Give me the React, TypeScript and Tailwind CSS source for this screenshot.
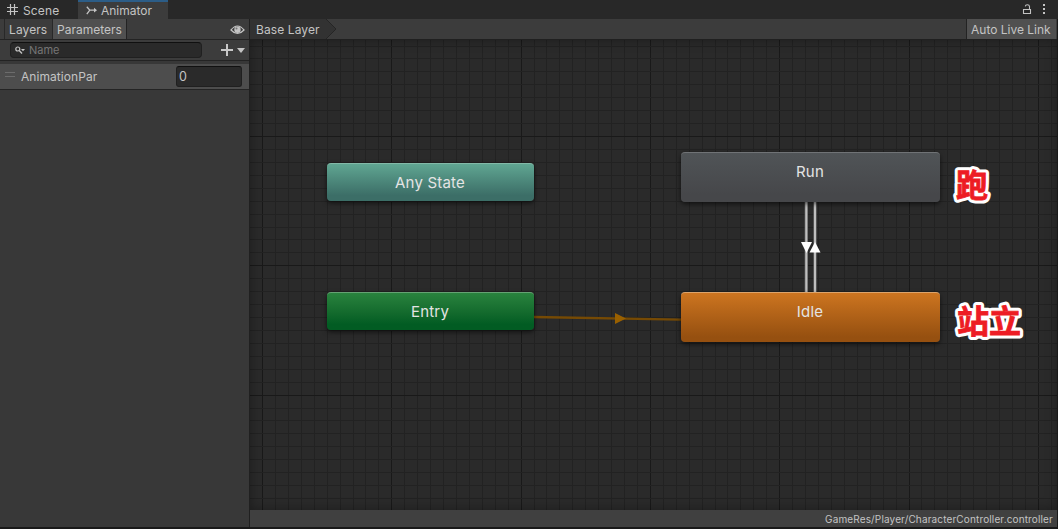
import React from 'react';

type NodeProps = {
  label: string;
  className: string;
};

const GRID = 12.93;
const WIDTH = 807;
const HEIGHT = 470;

const StateNode: React.FC<NodeProps> = ({ label, className }) => (
  <div
    className={`absolute rounded-[4px] border-t pr-px text-center text-[15px] leading-[18px] tracking-[0.2px] text-[#e4e4e4] shadow-[0_2px_5px_rgba(0,0,0,0.6)] ${className}`}
  >
    {label}
  </div>
);

const Grid: React.FC = () => {
  const columns = Array.from({ length: 63 }, (_, i) => i);
  const rows = Array.from({ length: 37 }, (_, i) => i);

  return (
    <svg className="absolute inset-0" width={WIDTH} height={HEIGHT} shapeRendering="crispEdges">
      {columns.map((i) => (
        <rect
          key={`c${i}`}
          x={Math.round(12 + i * GRID)}
          y={0}
          width={1}
          height={HEIGHT}
          fill={i % 10 === 0 ? '#191919' : '#222222'}
        />
      ))}
      {rows.map((i) => (
        <rect
          key={`r${i}`}
          x={0}
          y={Math.floor(6 + i * GRID)}
          width={WIDTH}
          height={1}
          fill={i % 10 === 7 ? '#191919' : '#222222'}
        />
      ))}
    </svg>
  );
};

const Transitions: React.FC = () => (
  <svg className="absolute inset-0" width={WIDTH} height={HEIGHT}>
    <path d="M284 277L431 279.6" stroke="#764a04" strokeWidth="2.4" />
    <path d="M365 273V284L376 278.4Z" fill="#996000" />
    <path d="M556.3 160V254M565 160V254" stroke="#646464" strokeWidth="3.4" />
    <path d="M556.3 160V254M565 160V254" stroke="#bebebe" strokeWidth="2" />
    <path d="M551 202H562L556.5 213Z" fill="#ffffff" />
    <path d="M559.5 212.5H570.5L565 202Z" fill="#ffffff" />
  </svg>
);

const Note: React.FC<{ text: string; className: string }> = ({ text, className }) => (
  <svg
    className={`absolute overflow-visible font-['Noto_Sans_CJK_SC',sans-serif] text-[32px] font-bold ${className}`}
    width="70"
    height="44"
  >
    <text x="4" y="32" fill="#ffffff" stroke="#ffffff" strokeWidth="7" strokeLinejoin="round">
      {text}
    </text>
    <text x="4" y="32" fill="#ed1c24" stroke="#ed1c24" strokeWidth="0.8">
      {text}
    </text>
  </svg>
);

const TabBar: React.FC = () => (
  <div className="flex h-[19px] shrink-0 bg-[#282828]">
    <div className="flex w-[78px] items-center pl-[7px]">
      <svg width="12" height="11" stroke="#c4c4c4" strokeWidth="1.2" fill="none">
        <path d="M3.5 0V11M7.5 0V11M0 3.5H11M0 7.5H11" />
      </svg>
      <span className="ml-1 pt-[3px] leading-4 tracking-[0.15px]">Scene</span>
    </div>
    <div className="flex w-[90px] items-center border-t-2 border-[#2c5d87] bg-[#3c3c3c] pl-[8px]">
      <svg width="12" height="10" fill="none" stroke="#c4c4c4" strokeWidth="1.3">
        <path d="M.8 .8L3.8 4.2H9M.8 8.2L3.8 4.2" />
        <path d="M8 1.8L11 4.2L8 6.6Z" fill="#c4c4c4" stroke="none" />
      </svg>
      <span className="ml-[3px] pt-px leading-4">Animator</span>
    </div>
    <div className="flex flex-1 justify-end pr-[11px] pt-1">
      <svg width="25" height="11" fill="none" stroke="#c4c4c4">
        <path d="M1.5 5.5H8.5V9.5H1.5ZM7.5 5V2.5Q7.3 .8 5.3 .8Q3.5 .8 3.3 2.4" strokeWidth="1.1" />
        <path d="M21 0H23V2H21ZM21 4H23V6H21ZM21 8H23V10H21Z" fill="#c4c4c4" stroke="none" />
      </svg>
    </div>
  </div>
);

const Sidebar: React.FC = () => (
  <div className="flex w-[250px] shrink-0 flex-col border-r border-[#202020] bg-[#383838]">
    <div className="flex h-[21px] shrink-0 border-b border-[#232323] bg-[#3c3c3c] pl-1">
      <div className="w-[49px] border-x border-[#282828] pl-1 leading-[22px] tracking-[0.1px]">
        Layers
      </div>
      <div className="w-[74px] border-r border-[#232323] bg-[#505050] pl-1 leading-[22px]">
        Parameters
      </div>
      <svg className="ml-auto mr-1 mt-[6px]" width="15" height="10" fill="none">
        <path d="M1 5Q7.5 -3 14 5Q7.5 12 1 5Z" stroke="#c4c4c4" strokeWidth="1.2" />
        <circle cx="7.5" cy="4.7" r="3.2" fill="#c4c4c4" />
        <circle cx="6.5" cy="3.5" r="1" fill="#777777" />
      </svg>
    </div>

    <div className="flex h-[21px] shrink-0 border-b border-[#232323] bg-[#3c3c3c] pl-[10px] pt-[2px]">
      <div className="flex h-4 w-[192px] items-center rounded-[4px] border border-[#202020] border-t-[#101010] bg-[#2a2a2a] pl-1">
        <svg width="11" height="9" fill="none" stroke="#c4c4c4">
          <circle cx="2.8" cy="3" r="2" strokeWidth="1.2" />
          <path d="M4.2 4.5L7 7.5" strokeWidth="1.4" />
          <path d="M6 3H10L8 5.2Z" fill="#c4c4c4" stroke="none" />
        </svg>
        <span className="ml-[3px] text-[11px] leading-4 text-[#767676]">Name</span>
      </div>
      <svg className="ml-[19px] mt-[2px]" width="26" height="12">
        <path d="M0 6H12M6 0V12" stroke="#c8c8c8" strokeWidth="2" />
        <path d="M16 4H24L20 9Z" fill="#c4c4c4" />
      </svg>
    </div>

    <div className="mt-[3px] flex h-[26px] shrink-0 items-center border-b border-[#242424] bg-[#4d4d4d] pl-[5px]">
      <div className="mb-[5px] h-[5px] w-[10px] border-y border-[#6c6c6c]" />
      <span className="ml-[6px] tracking-[0.06px]">AnimationPar</span>
      <div className="ml-auto mr-[7px] h-[21px] w-[66px] rounded-[3px] border border-[#202020] border-t-[#101010] bg-[#2a2a2a] pl-[2px] text-[12.5px] leading-[19px]">
        0
      </div>
    </div>
  </div>
);

const App: React.FC = () => {
  return (
    <div className="flex h-[529px] w-[1058px] flex-col overflow-hidden bg-[#191919] font-['Inter',sans-serif] text-[12px] text-[#c4c4c4]">
      <TabBar />
      <div className="flex h-[508px]">
        <Sidebar />
        <div className="flex w-[807px] flex-col">
          <div className="flex h-[21px] shrink-0 border-b border-[#202020] bg-[#3c3c3c]">
            <div className="relative w-[86px] bg-[#323232] pl-[6px] leading-[22px] tracking-[0.1px]">
              <svg className="absolute left-0 top-0" width="88" height="20">
                <path d="M76 0H88V20H76L86 10Z" fill="#3c3c3c" />
                <path d="M76 0L86 10L76 20" fill="none" stroke="#252525" />
              </svg>
              <span className="relative">Base Layer</span>
            </div>
            <div className="ml-auto mr-px w-[90px] border-l border-[#232323] bg-[#505050] pl-1 leading-[22px]">
              Auto Live Link
            </div>
          </div>

          <div className="relative h-[470px] overflow-hidden bg-[#2a2a2a]">
            <Grid />
            <div className="absolute inset-0 shadow-[inset_0_0_12px_rgba(0,0,0,0.35)]" />
            <Transitions />
            <StateNode
              label="Any State"
              className="left-[77px] top-[123px] h-[38px] w-[207px] border-[#83b9a8] bg-linear-to-b from-[#60a692] to-[#3c6e67] to-85% pt-[10px]"
            />
            <StateNode
              label="Entry"
              className="left-[77px] top-[252px] h-[38px] w-[207px] border-[#65a273] bg-linear-to-b from-[#29833e] to-[#025c23] to-85% pt-[10px]"
            />
            <StateNode
              label="Run"
              className="left-[431px] top-[112px] h-[50px] w-[259px] border-[#707376] bg-linear-to-b from-[#505457] to-[#46474a] to-85% pt-[10px]"
            />
            <StateNode
              label="Idle"
              className="left-[431px] top-[252px] h-[50px] w-[259px] border-[#dda46b] bg-linear-to-b from-[#cd7520] to-[#965010] to-90% pt-[10px]"
            />
            <Note text="跑" className="left-[702px] top-[125px]" />
            <Note text="站立" className="left-[703px] top-[261px]" />
          </div>

          <div className="h-[17px] bg-[#404040] pr-1 text-right text-[10px] leading-[19px] tracking-[0.14px]">
            GameRes/Player/CharacterController.controller
          </div>
        </div>
      </div>
    </div>
  );
};

export default App;
